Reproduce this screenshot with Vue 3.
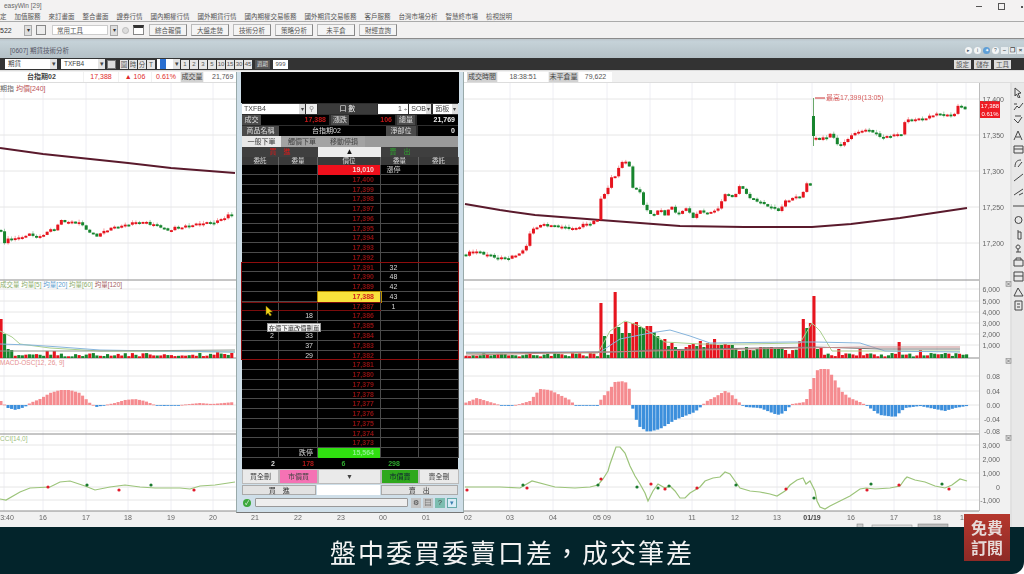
<script setup>
const menu = ['定', '加值服務', '來訂畫面', '整合畫面', '證券行情', '國內期權行情', '國外期貨行情', '國內期權交易帳務', '國外期貨交易帳務', '客戶服務', '台灣市場分析', '智慧終市場', '檢視說明']
const tbButtons = ['綜合報價', '大盤走勢', '技術分析', '策略分析', '未平倉', '財經查詢']
const periods = ['1', '2', '3', '5', '10', '15', '30', '45']

function interp(p, x) {
  if (x <= p[0][0]) return p[0][1]
  for (let i = 1; i < p.length; i++) {
    if (x <= p[i][0]) {
      const t = (x - p[i - 1][0]) / (p[i][0] - p[i - 1][0])
      return p[i - 1][1] + (p[i][1] - p[i - 1][1]) * t
    }
  }
  return p[p.length - 1][1]
}
const toPts = (p) => p.map((a) => a.join(',')).join(' ')
const noise = (x) => Math.sin(x * 12.9898) * 43758.5453 % 1

function candles(p, x0, x1) {
  const out = []
  let prev = interp(p, x0)
  for (let x = x0; x < x1; x += 3.55) {
    const c = interp(p, x) + noise(x) * 1.4
    const up = c < prev
    const top = Math.min(c, prev)
    const h = Math.max(Math.abs(c - prev), 1.8)
    const w = Math.abs(noise(x + 3)) * 2.6
    out.push({ x, top, h, wt: top - w, wb: top + h + w * 0.6, fill: up ? '#e6141e' : '#17852e' })
    prev = c
  }
  return out
}
const leftPrice = [[0,222],[3,243],[10,237],[20,237],[30,233],[40,236],[48,230],[55,228],[60,219],[70,222],[78,221],[90,232],[98,235],[110,227],[120,226],[133,222],[145,221],[155,224],[170,230],[175,226],[190,225],[200,222],[215,221],[225,216],[233,213]]
const rightA = [[465,254],[475,249],[485,253],[497,256],[507,257],[517,253],[525,249],[529,235],[535,226],[545,224],[555,225],[565,226],[575,228],[583,224],[592,222],[600,218],[601,195],[607,193],[610,176],[617,176],[620,160],[627,161],[631,168],[633,188],[640,190],[642,200],[647,210],[655,214],[660,207],[665,214],[672,205],[678,215],[685,205],[690,213],[693,216],[700,210],[710,212],[720,205],[725,193],[733,197],[740,185],[745,190],[750,198],[757,200],[766,204],[780,210],[785,200],[795,197],[802,195],[806,183],[810,184]]
const rightB = [[815,138],[825,137],[830,132],[838,143],[842,144],[850,135],[860,130],[870,128],[878,134],[885,137],[895,133],[900,136],[905,120],[915,118],[925,118],[935,113],[945,114],[950,116],[955,112],[958,106],[963,106],[967,108]]
const kbars = [...candles(leftPrice, 1, 235), ...candles(rightA, 466, 811), ...candles(rightB, 816, 968)]
const maLeft = toPts([[0,147],[43,153],[128,162],[171,167],[235,172]])
const maRight = toPts([[465,203],[500,209],[535,214],[600,219],[680,225],[744,226],[812,226],[851,223],[900,217],[967,207]])

const vGrid = [4,43,86,128,171,213,510,553,607,650,692,735,777,812,851,894,937,966]
const mainGrid = [98,134,170,206,242]
const priceLabels = [['17,400',98],['17,350',134],['17,300',170],['17,250',206],['17,200',242]]
const volGrid = [288,300,311,322,333,344]
const volLabels = [['6,000',288],['5,000',300],['4,000',311],['3,000',322],['2,000',333],['1,000',344]]
const macdGrid = [375,390,404,418,430]
const macdLabels = [['0.08',375],['0.04',390],['0.00',404],['-0.04',418],['-0.08',430]]
const cciGrid = [444,458,472,486,499]
const cciLabels = [['3,000',444],['2,000',458],['1,000',472],['0',486],['-1,000',499]]
const timeLabels = [['3:40',7],['16',43],['17',86],['18',128],['19',171],['20',213],['21',255],['22',298],['23',341],['00',383],['01',426],['02',468],['03',510],['04',553],['05',597],['09',607],['10',650],['11',692],['12',735],['13',777],['16',851],['17',894],['18',937],['19',964]]

const volBig = { 2: [318,'r'], 5: [333,'g'], 8: [348,'g'], 12: [349,'g'], 48: [350,'r'], 55: [350,'r'], 218: [351,'r'], 230: [352,'r'],
  601: [302,'r'], 606: [335,'g'], 610: [333,'r'], 613: [318,'r'], 616: [291,'r'], 620: [326,'g'], 623: [332,'g'], 626: [321,'r'], 630: [332,'g'], 633: [322,'r'], 637: [321,'r'], 641: [326,'g'], 644: [327,'g'], 648: [325,'r'], 651: [325,'r'], 655: [331,'g'], 658: [335,'g'], 662: [339,'g'], 665: [338,'r'], 669: [345,'g'], 672: [342,'r'], 676: [346,'g'], 679: [348,'r'], 683: [349,'g'], 686: [346,'r'], 690: [344,'r'], 693: [343,'r'], 697: [345,'g'], 700: [340,'r'], 704: [346,'g'], 707: [342,'r'], 711: [343,'r'], 714: [338,'r'], 718: [344,'r'], 722: [344,'g'], 725: [343,'r'], 729: [344,'r'], 732: [344,'g'],
  799: [340,'r'], 803: [318,'r'], 806: [327,'g'], 810: [322,'r'], 813: [295,'r'], 817: [348,'g'], 820: [347,'r'], 898: [341,'r'], 920: [349,'r'], 840: [348,'r'], 860: [348,'r'], 782: [347,'g'], 770: [346,'r'], 775: [347,'g'], 785: [349,'r'] }
function volBars(a, b) {
  const out = []
  for (let x = a; x < b; x += 3.55) {
    const key = Object.keys(volBig).find((k) => Math.abs(k - x) < 1.78)
    let top, fill
    if (key) {
      top = volBig[key][0]
      fill = volBig[key][1] === 'r' ? '#e6141e' : '#17852e'
    } else {
      const n = Math.abs(noise(x + 7))
      top = 357 - (x > 735 && x < 800 ? 4 + n * 7 : 1.5 + n * 3.5)
      fill = noise(x + 11) > 0 ? '#e6141e' : '#17852e'
    }
    out.push({ x, top, h: 357 - top, fill })
  }
  return out
}
const vols = [...volBars(1, 235), ...volBars(466, 968)]
const volLines = [
  { c: '#a9cf8e', p: [[0,330],[12,336],[20,343],[50,347],[100,350],[235,351]] },
  { c: '#86b4dc', p: [[0,343],[30,344],[60,346],[100,349],[160,350],[235,351]] },
  { c: '#8f9a8f', p: [[0,350],[100,350],[235,349]] },
  { c: '#a9cf8e', p: [[466,352],[598,352],[610,330],[625,320],[640,325],[665,341],[700,343],[744,343],[800,342],[812,322],[820,330],[832,350],[960,350]] },
  { c: '#86b4dc', p: [[466,351],[600,351],[620,338],[650,332],[670,329],[690,335],[710,342],[790,341],[815,341],[860,342],[885,350],[960,351]] },
  { c: '#777777', p: [[466,352],[620,351],[650,349],[760,347],[815,346],[880,348],[960,348]] },
  { c: '#c48a8a', p: [[466,354],[650,350],[800,347],[860,346],[960,346]] },
].map((l) => ({ c: l.c, d: toPts(l.p) }))

const macdEnv = [[0,5],[8,-3],[16,-5],[25,-2],[30,2],[40,6],[50,12],[60,15],[70,15],[80,12],[90,2],[97,-2],[105,0],[115,2],[125,5],[135,6],[145,4],[155,0],[165,-1],[180,0],[190,1],[200,2],[212,1],[235,3],
  [465,2],[477,7],[490,3],[500,0],[510,-1],[520,1],[530,4],[535,10],[540,16],[550,15],[560,10],[570,5],[575,0],[600,-1],[601,6],[610,16],[615,23],[625,24],[630,15],[632,1],[634,-10],[640,-22],[648,-27],[660,-24],[675,-15],[695,-7],[703,0],[705,3],[715,8],[725,14],[730,12],[740,2],[742,0],[745,-2],[760,-3],[775,-9],[780,-10],[787,-5],[790,-1],[792,1],[805,3],[808,8],[813,25],[818,36],[828,36],[835,25],[840,15],[850,7],[860,3],[866,0],[870,-3],[880,-10],[895,-12],[905,-3],[920,-1],[930,-3],[945,-6],[955,-3],[967,-1]]
function macdBars(a, b) {
  const out = []
  for (let x = a; x < b; x += 3.55) {
    const v = interp(macdEnv, x)
    out.push({ x, y: v >= 0 ? 404 - v : 404, h: Math.max(Math.abs(v), 0.8), fill: v >= 0 ? '#f58b8f' : '#3c8fdc' })
  }
  return out
}
const macd = [...macdBars(1, 235), ...macdBars(466, 968)]

const cciLeft = toPts([[0,498],[6,499],[20,491],[30,487],[50,486],[60,481],[70,480],[85,485],[95,489],[110,486],[125,484],[140,486],[155,487],[180,487],[190,488],[200,485],[215,484],[235,481]])
const cciRight = toPts([[465,486],[500,486],[520,487],[532,480],[555,486],[575,487],[590,486],[598,484],[603,478],[608,470],[610,463],[616,446],[620,446],[625,452],[630,465],[635,475],[640,483],[645,492],[648,500],[653,490],[658,483],[665,487],[670,485],[675,490],[680,497],[685,497],[690,492],[700,486],[705,480],[713,477],[720,476],[725,471],[730,473],[735,480],[740,487],[750,490],[760,491],[770,493],[777,495],[785,490],[790,484],[797,479],[803,477],[806,483],[810,480],[815,490],[817,500],[820,506],[825,508],[830,505],[840,500],[850,495],[860,488],[866,487],[875,488],[890,487],[900,485],[905,478],[907,476],[915,479],[925,481],[935,485],[945,487],[952,484],[960,478],[967,480]])
const redDots = [[48,486],[119,489],[194,489],[467,489],[527,487],[601,478],[651,483],[665,488],[697,487],[786,488],[867,489],[899,484],[949,488]]
const greenDots = [[87,484],[151,484],[523,484],[598,484],[637,486],[658,487],[669,485],[736,484],[814,497],[871,483],[942,483]]

const closeBoxes = [283, 360, 437]
const panelLines = [279, 357, 433, 510]

const book = []
for (let i = 0; i < 30; i++) {
  let price = (17401 - i).toLocaleString('en-US')
  let kind = 'norm'
  if (i === 0) { price = '19,010'; kind = 'up' }
  if (i === 13) kind = 'cur'
  if (i === 29) { price = '15,564'; kind = 'down' }
  book.push({ i, price, kind, bq: '', bo: '', sq: '' })
}
book[0].sq = '漲停'
book[10].sq = '32'; book[11].sq = '48'; book[12].sq = '42'; book[13].sq = '43'; book[14].sq = '1'
book[15].bq = '18'; book[17].bq = '33'; book[17].bo = '2'; book[18].bq = '37'; book[19].bq = '29'
book[29].bq = '跌停'

const tools = [
  'M2 1l6 5-3 .5 2 4-1.5.5-2-4L2 9z',
  'M1 9l3-4 2 2 4-5M1 3h3',
  'M1 4l4 4 4-6M2 1h6',
  'M1 10L5 1l4 9M3 7h4',
  'M1 2h9v7H1zM1 5h9',
  'M2 9c0-5 2-7 6-7M5 9l4-5',
  'M1 9l9-7',
  'M1 9l9-6M6 9l4-2',
  'M0 5h11',
  'M9 5a3.5 3.5 0 1 1-7 0a3.5 3.5 0 1 1 7 0',
  'M5 1v9h3V3H5',
  'M5 2a2 2 0 1 0 .1 0M5 6v3M3 9h5',
  'M1 3h9v6H1zM3 3V1h5v2',
  'M1 1h9v9H1zM1 5h9',
  'M1 10l4-8 5 8z',
  'M2 1h7v9H2zM4 4h3M4 7h3',
]
</script>

<template>
  <div class="screen">
    <div class="desktop">
      <header class="titlebar">
        <span class="appname">easyWin [29]</span>
        <span class="winbtns"><i class="minb"></i><i class="maxb"></i><i class="clsb"></i></span>
      </header>
      <nav class="menubar"><span v-for="m in menu" :key="m">{{ m }}</span></nav>
      <div class="toolbar">
        <span class="code">522</span>
        <span class="ddbtn first">▾</span>
        <span class="ticon"></span>
        <span class="tbselect">常用工具</span>
        <span class="ddbtn">▾</span>
        <span class="tcircle"></span>
        <span class="ticon dark"></span>
        <span class="tbbtns"><button v-for="b in tbButtons" :key="b" class="tbbtn">{{ b }}</button></span>
      </div>
      <div class="gapbar"></div>
      <div class="wintitle">
        <span class="wintext">[0607] 期貨技術分析</span>
        <span class="wintools">
          <i class="rnd">▸</i><i class="rnd">i</i><i class="rnd blue">✦</i><i class="rnd">?</i>
          <b class="sq">–</b><b class="sq">❐</b><b class="sq">×</b>
        </span>
      </div>
      <div class="ctlbar">
        <span class="ctlpick">期貨<em>▾</em></span>
        <span class="ctlpick sym">TXFB4<em>▾</em></span>
        <span class="ctlicon"></span>
        <span class="pbtns"><b>圖</b><b>時</b><b>分</b><b>T</b></span>
        <span class="ctlpick unit"><u>1</u><em>▾</em></span>
        <span class="pbtns nums"><b v-for="p in periods" :key="p">{{ p }}</b></span>
        <span class="darkbtn">週期</span>
        <span class="count">999</span>
        <span class="ctlright"><b>設定</b><b>儲存</b><b>工具</b></span>
      </div>
      <div class="quote">
        <span class="q-name">台指期02</span>
        <span class="q-red q-a">17,388</span>
        <span class="q-red q-b">▲ 106</span>
        <span class="q-red q-c">0.61%</span>
        <span class="q-lab q-d">成交量</span>
        <span class="q-val q-e">21,769</span>
        <span class="q-lab q-f">成交時間</span>
        <span class="q-val q-g">18:38:51</span>
        <span class="q-lab q-h">未平倉量</span>
        <span class="q-val q-i">79,622</span>
      </div>
      <div class="chartrow">
        <svg class="chart" width="1012" height="445" viewBox="0 82 1012 445" font-family="'Liberation Sans','Noto Sans CJK TC',sans-serif">
          <rect x="0" y="82" width="1012" height="445" fill="#f1f1f1" />
          <rect x="0" y="82" width="979" height="428" fill="#fff" />
          <line v-for="x in vGrid" :key="'v' + x" :x1="x" :x2="x" y1="82" y2="510" stroke="#eeeef4" stroke-width="1" />
          <line v-for="y in [...mainGrid, ...volGrid, ...macdGrid, ...cciGrid]" :key="'h' + y" x1="0" x2="979" :y1="y" :y2="y" stroke="#e6e6e6" stroke-width="1" />
          <line v-for="y in panelLines" :key="'p' + y" x1="0" x2="979" :y1="y" :y2="y" stroke="#8c8c8c" stroke-width="1" />
          <line x1="979.5" x2="979.5" y1="82" y2="510" stroke="#bdbdbd" />
          <line x1="1011" x2="1011" y1="82" y2="527" stroke="#d0d0d0" />

          <text x="0" y="90" font-size="7" fill="#666">期指 <tspan fill="#b55">均價[240]</tspan></text>
          <text x="0" y="286" font-size="6.5" fill="#8cad6c">成交量 均量[5] <tspan fill="#5b9ccf">均量[20]</tspan> <tspan fill="#8cad6c">均量[60]</tspan> <tspan fill="#a46060">均量[120]</tspan></text>
          <text x="0" y="364" font-size="6.5" fill="#e69090">MACD-OSC[12, 26, 9]</text>
          <text x="0" y="440" font-size="6.5" fill="#a0bf80">CCI[14,0]</text>

          <polyline :points="maLeft" fill="none" stroke="#5a1a2c" stroke-width="2" />
          <polyline :points="maRight" fill="none" stroke="#5a1a2c" stroke-width="2" />
          <g v-for="k in kbars" :key="'k' + k.x">
            <line :x1="k.x" :x2="k.x" :y1="k.wt" :y2="k.wb" :stroke="k.fill" stroke-width="0.7" opacity="0.55" />
            <rect :x="k.x - 1.5" :y="k.top" width="3" :height="k.h" :fill="k.fill" />
          </g>
          <line x1="813.5" x2="813.5" y1="97" y2="145" stroke="#6aa86a" stroke-width="1" />
          <rect x="812" y="115" width="3" height="20" fill="#17852e" />
          <line x1="815" x2="825" y1="97" y2="97" stroke="#cc3333" />
          <text x="826" y="99" font-size="7" fill="#d86060">最高17,399(13:05)</text>

          <rect v-for="v in vols" :key="'vb' + v.x" :x="v.x - 1.5" :y="v.top" width="3.1" :height="v.h" :fill="v.fill" />
          <polyline v-for="l in volLines" :key="l.d" :points="l.d" fill="none" :stroke="l.c" stroke-width="1" />

          <rect v-for="m in macd" :key="'m' + m.x" :x="m.x - 1.6" :y="m.y" width="3.1" :height="m.h" :fill="m.fill" />

          <polyline :points="cciLeft" fill="none" stroke="#9cc47a" stroke-width="1.2" />
          <polyline :points="cciRight" fill="none" stroke="#9cc47a" stroke-width="1.2" />
          <circle v-for="d in redDots" :key="'rd' + d[0]" :cx="d[0]" :cy="d[1]" r="1.6" fill="#e01a2a" />
          <circle v-for="d in greenDots" :key="'gd' + d[0]" :cx="d[0]" :cy="d[1]" r="1.6" fill="#1a7a2e" />

          <rect x="980" y="100" width="20" height="17" fill="#ee1c25" />
          <text x="990" y="107" font-size="6" fill="#fff" text-anchor="middle">17,388</text>
          <text x="990" y="114.5" font-size="6" fill="#fff" text-anchor="middle">0.61%</text>
          <text v-for="l in priceLabels" :key="l[0]" x="1004" :y="l[1] + 2.5" font-size="7" fill="#666" text-anchor="end">{{ l[0] }}</text>
          <text v-for="l in volLabels" :key="l[0]" x="1000" :y="l[1] + 2.5" font-size="7" fill="#666" text-anchor="end">{{ l[0] }}</text>
          <text v-for="l in macdLabels" :key="l[0]" x="1000" :y="l[1] + 2.5" font-size="7" fill="#666" text-anchor="end">{{ l[0] }}</text>
          <text v-for="l in cciLabels" :key="l[0]" x="1000" :y="l[1] + 2.5" font-size="7" fill="#666" text-anchor="end">{{ l[0] }}</text>
          <g v-for="y in closeBoxes" :key="'c' + y">
            <rect x="1006" :y="y - 2.5" width="5" height="5" fill="#dcdcdc" stroke="#888" stroke-width="0.6" />
            <path :d="`M1007 ${y - 1.5}l3 3m0-3l-3 3`" stroke="#555" stroke-width="0.6" />
          </g>
          <text v-for="t in timeLabels" :key="t[0] + t[1]" :x="t[1]" y="519" font-size="7" fill="#666" text-anchor="middle">{{ t[0] }}</text>
          <text x="812" y="519" font-size="7" font-weight="bold" fill="#444" text-anchor="middle">01/19</text>
          <rect x="857" y="523" width="6" height="4" fill="#ccc" stroke="#777" stroke-width="0.5" />
          <rect x="872" y="524" width="40" height="3" fill="#ddd" stroke="#888" stroke-width="0.5" />
          <rect x="918" y="523" width="30" height="4" fill="#bbb" stroke="#777" stroke-width="0.5" />
        </svg>
        <aside class="toolstrip">
          <svg v-for="(t, i) in tools" :key="i" width="11" height="11" viewBox="0 0 11 11" class="tool">
            <path :d="t" fill="none" stroke="#444" stroke-width="1" />
          </svg>
        </aside>
      </div>
    </div>

    <div class="orderwin">
      <div class="blackhead"></div>
      <div class="o-row r1">
        <span class="o-sel s-a">TXFB4<em>▾</em></span>
        <span class="o-find">⚲</span>
        <span class="o-dark">口 數</span>
        <span class="o-num">1<i>÷</i></span>
        <span class="o-sel s-b">SOB<em>▾</em></span>
        <span class="o-sel s-c">面板<em>▾</em></span>
      </div>
      <div class="o-row r2">
        <span class="o-lab w19">成交</span><span class="o-val red w68">17,388</span>
        <span class="o-lab w18">漲跌</span><span class="o-val red w46">106</span>
        <span class="o-lab w18">總量</span><span class="o-val white grow">21,769</span>
      </div>
      <div class="o-row r2">
        <span class="o-lab w37">商品名稱</span><span class="o-val ctr w107">台指期02</span>
        <span class="o-lab w30">淨部位</span><span class="o-val white grow">0</span>
      </div>
      <div class="o-tabs"><span class="on">一般下單</span><span>觸價下單</span><span>移動停損</span></div>
      <div class="o-grid head1">
        <span class="hd-buy">買　進</span><span class="hd-up">▲</span><span class="hd-sell">賣　出</span>
      </div>
      <div class="o-grid head2">
        <span>委託</span><span>委量</span><span>價位</span><span>委量</span><span>委託</span>
      </div>
      <div class="o-book">
        <div v-for="r in book" :key="r.i" class="o-grid bookrow">
          <span class="cell num">{{ r.bo }}</span>
          <span class="cell num">{{ r.bq }}</span>
          <span class="cell price" :class="r.kind">{{ r.price }}</span>
          <span class="cell ctr">{{ r.sq }}</span>
          <span class="cell"></span>
        </div>
      </div>
      <div class="o-grid totals">
        <span class="num wt">2</span><span class="num rd">178</span><span class="ctr gn">6</span><span class="ctr gn">298</span><span></span>
      </div>
      <div class="o-grid actions">
        <span class="act">買全刪</span><span class="act pink">市價買</span><span class="act">▼</span><span class="act grn">市價賣</span><span class="act">賣全刪</span>
      </div>
      <div class="orderline">
        <span class="ol-btn buy">買　進</span><span class="ol-in"></span><span class="ol-btn sell">賣　出</span>
      </div>
      <div class="statusline">
        <span class="okdot">✓</span>
        <span class="st-in"></span>
        <span class="st-b">⚙</span><span class="st-b">▤</span><span class="st-b teal">?</span><span class="st-b sky">▾</span>
      </div>

      <div class="redbox"></div>
      <div class="redline"></div>
      <svg class="cursor" width="9" height="12" viewBox="0 0 9 12"><path d="M1 1v9l2-2 2 3 1.5-1-2-3h3z" fill="#f2d21a" stroke="#7a6a00" stroke-width=".5" /></svg>
      <div class="tip">在價下單改價刪單</div>
    </div>

    <footer class="caption">盤中委買委賣口差，成交筆差</footer>
    <div class="badge"><span>免費</span><span>訂閱</span></div>
  </div>
</template>

<style>
html, body { margin: 0; background: #fff; }
</style>

<style scoped>
.screen { position: relative; width: 1024px; height: 574px; overflow: hidden; background: #fff; font-family: "Liberation Sans", "Noto Sans CJK TC", sans-serif; color: #333; }
.desktop { display: flex; flex-direction: column; height: 527px; background: #f2f1f1; filter: blur(0.55px); }
.titlebar { height: 10px; display: flex; justify-content: space-between; align-items: flex-end; font-size: 6.5px; line-height: 8px; padding-left: 4px; background: #f3f2f2; }
.appname { color: #666; }
.winbtns { display: flex; align-items: center; gap: 16px; padding-right: 1px; }
.winbtns i { display: block; }
.minb { width: 6px; height: 1px; background: #555; }
.maxb { width: 5px; height: 5px; border: 1px solid #555; }
.clsb { width: 2px; height: 2px; background: #555; }
.menubar { height: 11px; display: flex; gap: 8px; align-items: center; font-size: 6.5px; color: #555; background: #f3f2f2; white-space: nowrap; border-bottom: 1px solid #aaa; box-sizing: content-box; }
.toolbar { height: 16px; display: flex; align-items: center; background: #f2f1f1; font-size: 6.5px; border-bottom: 1px solid #8b8b8b; }
.code { width: 24px; font-size: 7px; }
.ddbtn { width: 6px; height: 9px; line-height: 9px; text-align: center; background: #dedede; border: 1px solid #aaa; font-size: 6px; }
.first { margin-right: 4px; }
.ticon { width: 8px; height: 8px; border: 1px solid #888; margin-right: 6px; background: #ececec; }
.ticon.dark { width: 9px; border-top: 3px solid #333; height: 6px; margin: 0 5px 0 4px; background: #fff; }
.tbselect { width: 56px; height: 10px; line-height: 10px; padding-left: 4px; background: #fff; box-sizing: border-box; border: 1px solid #ccc; margin-right: 2px; color: #555; }
.tcircle { width: 7px; height: 7px; border-radius: 50%; background: #dcdcdc; border: 1px solid #bbb; margin-left: 4px; box-sizing: border-box; }
.tbbtns { display: flex; gap: 4px; }
.tbbtn { width: 38px; height: 12px; padding: 0; border: 1px solid #bbb; border-right-color: #888; border-bottom-color: #888; background: #f4f4f4; font: inherit; font-size: 6.5px; color: #555; }
.gapbar { height: 3px; background: linear-gradient(#bcc6cc, #c6d3da); }
.wintitle { height: 16px; display: flex; justify-content: space-between; align-items: center; background: linear-gradient(#c5d2d8, #b4c0c6); font-size: 6.5px; color: #556; padding-left: 10px; }
.wintools { display: flex; align-items: center; gap: 1px; }
.rnd { width: 7px; height: 7px; border-radius: 50%; background: #f4f6f7; color: #456; font-size: 5px; line-height: 7px; text-align: center; font-style: normal; margin-right: 1px; }
.rnd.blue { background: #5e9ed6; color: #fff; }
.sq { width: 7px; height: 7px; background: #e6ecef; color: #444; font-size: 6px; line-height: 7px; text-align: center; }
.ctlbar { height: 12px; display: flex; align-items: center; background: #333; font-size: 6.5px; margin-top: 0; padding-left: 5px; border-bottom: 1px solid #ddd; }
.ctlpick { width: 52px; height: 10px; line-height: 10px; background: #fff; color: #444; padding-left: 3px; box-sizing: border-box; display: flex; justify-content: space-between; margin-right: 4px; }
.ctlpick em { font-style: normal; width: 7px; text-align: center; background: #e4e4e4; }
.ctlpick.sym { width: 44px; margin-right: 2px; }
.ctlpick.unit { width: 23px; margin: 0 1px 0 2px; }
.ctlpick.unit u { text-decoration: none; background: #2a6fd0; color: #2a6fd0; width: 6px; }
.ctlicon { width: 9px; height: 9px; background: #ddd; border: 1px solid #777; box-sizing: border-box; margin-right: 4px; }
.pbtns { display: flex; gap: 1px; }
.pbtns b { font-weight: 400; width: 8px; height: 9px; line-height: 9px; text-align: center; background: #e6e6e6; color: #555; font-size: 6.5px; }
.nums b { font-size: 6px; }
.darkbtn { width: 15px; height: 9px; line-height: 9px; margin: 0 3px 0 3px; background: #555; color: #ddd; text-align: center; font-size: 5.5px; }
.count { width: 15px; height: 9px; line-height: 9px; background: #fff; color: #555; font-size: 6px; text-align: center; }
.ctlright { margin-left: auto; display: flex; gap: 3px; padding-right: 13px; }
.ctlright b { width: 17px; height: 9px; line-height: 9px; background: #dedede; color: #555; font-weight: 400; font-size: 6.5px; text-align: center; }
.quote { height: 12px; display: flex; align-items: center; font-size: 7px; background: #f1f1f1; line-height: 10px; white-space: nowrap; border-bottom: 1px solid #ddd; box-sizing: border-box; }
.quote span { display: block; height: 10px; background: #fff; margin-right: 1px; text-align: center; box-sizing: border-box; }
.q-name { width: 83px; font-weight: 700; color: #444; }
.q-red { color: #e02a2a; }
.q-a { width: 34px; }
.q-b { width: 32px; }
.q-c { width: 28px; }
.quote .q-lab { background: #d2d2d2; color: #444; }
.q-d { width: 22px; }
.quote .q-e { width: 263px; margin-right: 0; text-align: left; padding-left: 8px; }
.q-val { color: #555; }
.q-f { width: 30px; }
.q-g { width: 50px; }
.q-h { width: 29px; }
.q-i { width: 33px; }
.chartrow { flex: 1; display: flex; min-height: 0; }
.chart { display: block; flex: none; }
.toolstrip { width: 12px; background: #e8e8e8; display: flex; flex-direction: column; gap: 3.2px; padding-top: 4px; align-items: center; overflow: hidden; }
.tool { flex: none; }

.orderwin { position: absolute; left: 236px; top: 72px; width: 228px; height: 441px; box-sizing: border-box; padding: 0 5px; background: #cfdfe9; border-left: 1px solid #9aa; border-right: 1px solid #9aa; border-bottom: 1px solid #777; font-size: 7px; filter: blur(0.5px); color: #ddd; }
.blackhead { height: 31px; margin: 0 -1px; background: #000; }
.o-row { height: 11px; display: flex; align-items: center; background: #2e2e2e; }
.r1 { gap: 1px; }
.o-sel { height: 10px; line-height: 10px; background: #fff; color: #444; padding-left: 2px; box-sizing: border-box; display: flex; justify-content: space-between; }
.o-sel em { font-style: normal; width: 6px; background: #ddd; text-align: center; font-size: 6px; }
.s-a { width: 64px; }
.s-b { width: 22px; }
.s-c { width: 25px; margin-left: 1px; }
.o-find { width: 11px; height: 10px; line-height: 10px; background: #eee; color: #888; text-align: center; }
.o-dark { width: 59px; height: 10px; line-height: 10px; text-align: center; background: #3b3b3b; color: #eee; }
.o-num { width: 31px; height: 10px; line-height: 10px; background: #fff; color: #444; text-align: right; padding-right: 1px; box-sizing: border-box; }
.o-num i { font-style: normal; font-size: 6px; margin-left: 2px; }
.o-lab { display: block; height: 10px; line-height: 10px; background: #4a4a4a; color: #ddd; text-align: center; flex: none; }
.o-val { display: block; height: 10px; line-height: 10px; background: #000; text-align: right; padding-right: 3px; box-sizing: border-box; font-weight: 700; flex: none; }
.o-val.red { color: #c41818; }
.o-val.white { color: #eee; }
.o-val.ctr { text-align: center; color: #ddd; font-weight: 400; }
.o-val.grow { flex: 1; margin-left: 2px; }
.w19 { width: 19px; } .w68 { width: 68px; margin-right: 2px; } .w18 { width: 18px; } .w46 { width: 46px; margin-right: 2px; } .w37 { width: 37px; } .w107 { width: 107px; } .w30 { width: 30px; }
.o-tabs { height: 11px; display: flex; background: #9a9a9a; line-height: 11px; }
.o-tabs span { width: 42px; text-align: center; color: #444; background: #a3a3a3; }
.o-tabs .on { width: 39px; background: #e8e8e8; color: #333; }
.o-grid { display: grid; grid-template-columns: 37px 39px 63px 38px 40px; }
.head1 { height: 10px; background: #3f3f3f; line-height: 10px; }
.hd-buy { grid-column: 1 / 3; text-align: center; color: #e01818; }
.hd-up { background: #ececec; color: #111; text-align: center; font-size: 8px; }
.hd-sell { grid-column: 4 / 6; text-align: center; color: #2ea82e; padding-right: 40px; box-sizing: border-box; }
.head2 { height: 8px; line-height: 8px; background: #3a3a3a; text-align: center; color: #ddd; font-size: 6.5px; }
.head2 span { border-right: 1px solid #666; }
.o-book { background: #000; }
.bookrow { height: 9.78px; line-height: 9.78px; box-sizing: border-box; border-bottom: 1px solid #4a4a4a; }
.cell { border-right: 1px solid #4a4a4a; min-width: 0; color: #d8d8d8; }
.num { text-align: right; padding-right: 4px; box-sizing: border-box; }
.ctr { text-align: center; padding-right: 12px; box-sizing: border-box; }
.price { text-align: right; padding-right: 6px; box-sizing: border-box; font-weight: 700; color: #8e1010; }
.price.up { background: #f0101c; color: #f6d0d0; }
.price.cur { background: #f8e23c; color: #d02020; outline: 1px solid #b89000; position: relative; }
.price.down { background: #30e010; color: #8cf08c; }
.totals { height: 11px; line-height: 11px; background: #000; font-weight: 700; }
.wt { color: #ddd; } .rd { color: #b01818; } .gn { color: #2ea82e; }
.actions { height: 15px; background: #888; }
.act { display: block; line-height: 13px; background: #eaeaea; text-align: center; color: #444; border: 1px solid #bbb; box-sizing: border-box; }
.act.pink { background: #f572b4; }
.act.grn { background: #2fa81c; color: #123; }
.orderline { height: 11px; display: flex; gap: 1px; margin-top: 1px; }
.ol-btn { background: #e2e2e2; color: #333; text-align: center; line-height: 10px; border: 1px solid #aaa; box-sizing: border-box; height: 10px; }
.buy { width: 75px; margin-right: 0; }
.ol-in { width: 63px; height: 10px; background: #fff; }
.sell { width: 78px; }
.statusline { height: 12px; display: flex; align-items: center; gap: 2px; margin-top: 1px; }
.okdot { width: 8px; height: 8px; border-radius: 50%; background: #3ca83c; color: #fff; font-size: 6px; line-height: 8px; text-align: center; margin: 0 2px 0 1px; }
.st-in { width: 153px; height: 9px; background: #eee; border: 1px solid #999; box-sizing: border-box; border-radius: 1px; margin-right: 1px; }
.st-b { width: 10px; height: 10px; line-height: 10px; text-align: center; background: #c4c4c4; color: #444; font-size: 7px; }
.st-b.teal { background: #7cbdb0; }
.st-b.sky { background: #d8ecf6; color: #3a7fb0; border: 1px solid #6aa; box-sizing: border-box; line-height: 8px; }
.redbox { position: absolute; left: 4px; top: 190px; width: 218px; height: 98px; box-sizing: border-box; border: 1.6px solid #8f0d0d; }
.redline { position: absolute; left: 4px; top: 230px; width: 140px; height: 9px; box-sizing: border-box; border-top: 1px solid #7a0c0c; border-bottom: 1px solid #7a0c0c; }
.cursor { position: absolute; left: 28px; top: 233px; }
.tip { position: absolute; left: 30px; top: 251px; width: 54px; height: 9px; line-height: 9px; background: #f4f4f4; border: 1px solid #999; box-sizing: border-box; color: #333; font-size: 6.3px; text-align: center; white-space: nowrap; overflow: hidden; }

.caption { position: absolute; left: 0; top: 527px; width: 1024px; height: 47px; box-sizing: border-box; padding-right: 0; background: #03242b; color: #f4f4f4; border-bottom-right-radius: 12px; font-family: "Noto Sans CJK TC", "Liberation Sans", sans-serif; font-size: 26px; line-height: 50px; letter-spacing: 2px; text-align: center; white-space: nowrap; filter: blur(0.3px); }
.badge { position: absolute; left: 964px; top: 514px; width: 46px; height: 47px; box-sizing: border-box; padding-top: 3px; display: flex; flex-direction: column; align-items: center; gap: 0; background: linear-gradient(#b5382e, #8e2a26); color: #e7dad8; font-family: "Noto Sans CJK TC", sans-serif; font-weight: 700; font-size: 16px; text-align: center; filter: blur(0.4px); }
.badge span { display: block; height: 20px; line-height: 20px; overflow: hidden; }
</style>
